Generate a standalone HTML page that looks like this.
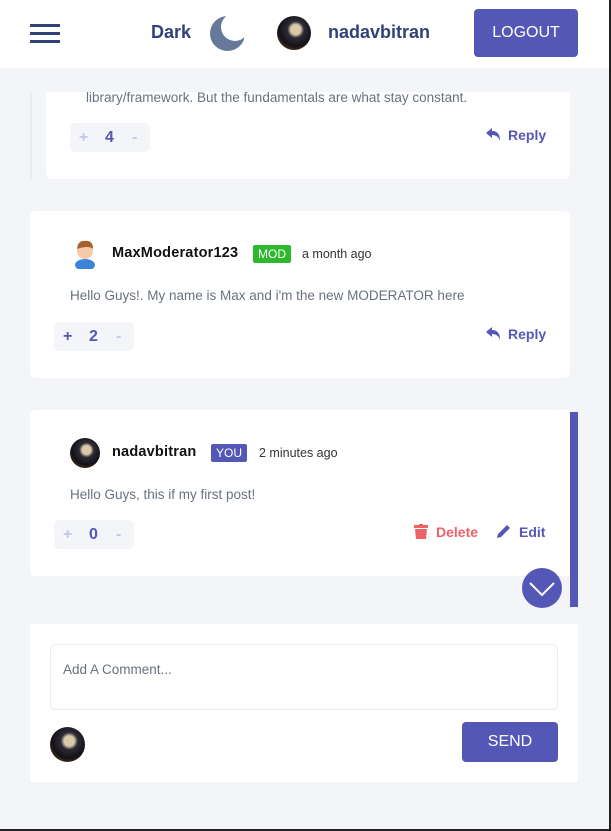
<!DOCTYPE html>
<html><head><meta charset="utf-8"><style>
*{margin:0;padding:0;box-sizing:border-box}
body{width:611px;height:831px;overflow:hidden;background:#f4f5f9;font-family:"Liberation Sans",sans-serif;position:relative}
.a{position:absolute}
.card{position:absolute;background:#fff;border-radius:6px}
.vote{position:absolute;width:80px;height:29px;background:#f4f5f9;border-radius:6px;font-weight:bold;color:#5457b6}
.vote span{position:absolute;top:6px;font-size:16px}
.pl{left:9px;color:#c5c6ef}.n{left:35px}.mi{left:62px;color:#c5c6ef}
.av{position:absolute;border-radius:50%;background:radial-gradient(circle at 55% 40%,#d9c9a8 0 18%,#2c2a35 30%,#141217 60%,#5b3b1e 85%,#1a1a1a 100%)}
.txt{position:absolute;color:#67727e;font-size:13.5px}
.name{position:absolute;font-weight:bold;font-size:14.5px;color:#111;letter-spacing:0.2px}
.time{position:absolute;font-size:12.5px;color:#333}
.act{position:absolute;font-weight:bold;font-size:14px}
</style></head><body>
<div class="a" style="left:0;top:0;width:611px;height:68px;background:#fff"></div>
<div class="a" style="left:30px;top:24px;width:30px;height:3px;background:#324277"></div>
<div class="a" style="left:30px;top:32px;width:30px;height:3px;background:#324277"></div>
<div class="a" style="left:30px;top:40px;width:30px;height:3px;background:#324277"></div>
<div class="a" style="left:151px;top:22px;font-weight:bold;font-size:18px;color:#324277">Dark</div>
<svg class="a" style="left:209px;top:15px" width="37" height="37" viewBox="0 0 37 37"><defs><mask id="m"><rect width="37" height="37" fill="#fff"/><circle cx="26" cy="12" r="14" fill="#000"/></mask></defs><circle cx="18.5" cy="18.5" r="17.5" fill="#67799a" mask="url(#m)"/></svg>
<div class="av" style="left:277px;top:16px;width:34px;height:34px"></div>
<div class="a" style="left:328px;top:22px;font-weight:bold;font-size:18px;color:#324277">nadavbitran</div>
<div class="a" style="left:474px;top:9px;width:104px;height:48px;background:#5457b6;border-radius:4px;color:#fff;font-size:16px;text-align:center;line-height:48px">LOGOUT</div>

<div class="a" style="left:30px;top:92px;width:2px;height:87px;background:#e9ebf0"></div>
<div class="card" style="left:46px;top:92px;width:524px;height:87px;border-radius:0 0 6px 6px"></div>
<div class="txt" style="left:86px;top:90px">library/framework. But the fundamentals are what stay constant.</div>
<div class="vote" style="left:70px;top:123px"><span class="pl">+</span><span class="n">4</span><span class="mi">-</span></div>
<svg class="a" style="left:486px;top:128px" width="15" height="13" viewBox="0 0 15 13"><path d="M6 0L0 5L6 10V7Q12 7 14 13Q14 3 6 3Z" fill="#5457b6"/></svg>
<div class="act" style="left:508px;top:127px;color:#5457b6">Reply</div>

<div class="card" style="left:30px;top:211px;width:540px;height:167px"></div>
<svg class="a" style="left:72px;top:237px" width="26" height="32" viewBox="0 0 26 32"><ellipse cx="13" cy="28" rx="10" ry="6" fill="#3a85d6"/><circle cx="13" cy="14" r="8" fill="#f6caa8"/><path d="M5 12 Q6 3 13 4 Q21 3 21 12 Q17 8 5 12Z" fill="#a8602f"/></svg>
<div class="name" style="left:112px;top:245px">MaxModerator123</div>
<div class="a" style="left:253px;top:245px;width:38px;height:18px;background:#2eb82e;border-radius:2px;color:#fff;font-size:12px;text-align:center;line-height:18px">MOD</div>
<div class="time" style="left:302px;top:247px">a month ago</div>
<div class="txt" style="left:70px;top:288px">Hello Guys!. My name is Max and i'm the new MODERATOR here</div>
<div class="vote" style="left:54px;top:322px"><span class="pl" style="color:#5457b6">+</span><span class="n">2</span><span class="mi">-</span></div>
<svg class="a" style="left:486px;top:327px" width="15" height="13" viewBox="0 0 15 13"><path d="M6 0L0 5L6 10V7Q12 7 14 13Q14 3 6 3Z" fill="#5457b6"/></svg>
<div class="act" style="left:508px;top:326px;color:#5457b6">Reply</div>

<div class="card" style="left:30px;top:410px;width:540px;height:166px;border-radius:6px 0 0 6px"></div>
<div class="a" style="left:570px;top:412px;width:8px;height:195px;background:#5457b6"></div>
<div class="av" style="left:70px;top:438px;width:30px;height:30px"></div>
<div class="name" style="left:112px;top:444px">nadavbitran</div>
<div class="a" style="left:211px;top:444px;width:36px;height:18px;background:#5457b6;border-radius:2px;color:#fff;font-size:12px;text-align:center;line-height:18px">YOU</div>
<div class="time" style="left:259px;top:446px">2 minutes ago</div>
<div class="txt" style="left:70px;top:487px">Hello Guys, this if my first post!</div>
<div class="vote" style="left:54px;top:520px"><span class="pl">+</span><span class="n">0</span><span class="mi">-</span></div>
<svg class="a" style="left:414px;top:524px" width="14" height="15" viewBox="0 0 14 15"><rect x="0" y="1" width="14" height="3" fill="#ed6368"/><rect x="5" y="0" width="4" height="2" fill="#ed6368"/><path d="M1 5H13L12 15H2Z" fill="#ed6368"/></svg>
<div class="act" style="left:436px;top:524px;color:#ed6368">Delete</div>
<svg class="a" style="left:497px;top:524px" width="14" height="15" viewBox="0 0 14 15"><path d="M10 1L13 4L4 13L0 14L1 10Z" fill="#5457b6"/></svg>
<div class="act" style="left:519px;top:524px;color:#5457b6">Edit</div>
<div class="a" style="left:522px;top:568px;width:40px;height:40px;border-radius:50%;background:#5457b6"></div>
<svg class="a" style="left:522px;top:568px" width="40" height="40"><path d="M8 15L20 27L32 15" stroke="#fff" stroke-width="2" fill="none"/></svg>

<div class="card" style="left:30px;top:624px;width:548px;height:158px;border-radius:0"></div>
<div class="a" style="left:50px;top:644px;width:508px;height:66px;border:1px solid #e9ebf0;border-radius:6px"></div>
<div class="a" style="left:63px;top:662px;font-size:13.5px;color:#67727e">Add A Comment...</div>
<div class="av" style="left:50px;top:727px;width:35px;height:35px"></div>
<div class="a" style="left:462px;top:722px;width:96px;height:40px;background:#5457b6;border-radius:4px;color:#fff;font-size:16px;text-align:center;line-height:40px">SEND</div>

<div class="a" style="left:609px;top:0;width:2px;height:831px;background:#222"></div>
<div class="a" style="left:0;top:829px;width:611px;height:2px;background:#222"></div>
</body></html>
